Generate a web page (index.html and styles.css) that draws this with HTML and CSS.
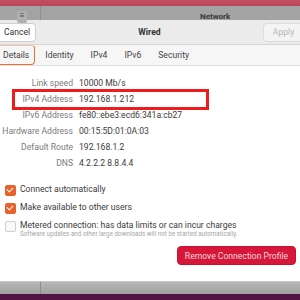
FILE: index.html
```html
<!DOCTYPE html>
<html lang="en">
<head>
  <meta charset="UTF-8">
  <title>Wired</title>
  <link rel="stylesheet" href="styles.css">
</head>
<body>
  <div class="topbar"></div>
  <div class="shell">
    <div class="shell-side"><span class="menu-btn">&#8801;</span></div>
    <div class="shell-title">Network</div>
  </div>

  <div class="dialog">
    <div class="header">
      <button class="btn cancel">Cancel</button>
      <span class="title">Wired</span>
      <button class="btn apply">Apply</button>
    </div>

    <div class="tabs">
      <a href="#" class="active">Details</a>
      <a href="#">Identity</a>
      <a href="#">IPv4</a>
      <a href="#">IPv6</a>
      <a href="#">Security</a>
    </div>

    <div class="content">
      <div class="info">
        <div class="row"><span class="label">Link speed</span><span class="value">10000 Mb/s</span></div>
        <div class="row highlight"><span class="label">IPv4 Address</span><span class="value">192.168.1.212</span></div>
        <div class="row"><span class="label">IPv6 Address</span><span class="value">fe80::ebe3:ecd6:341a:cb27</span></div>
        <div class="row"><span class="label">Hardware Address</span><span class="value">00:15:5D:01:0A:03</span></div>
        <div class="row"><span class="label">Default Route</span><span class="value">192.168.1.2</span></div>
        <div class="row"><span class="label">DNS</span><span class="value">4.2.2.2 8.8.4.4</span></div>
      </div>

      <div class="checks">
        <label class="check"><span class="box on"></span>Connect automatically</label>
        <label class="check"><span class="box on"></span>Make available to other users</label>
        <label class="check"><span class="box"></span>
          <span>Metered connection: has data limits or can incur charges
            <small>Software updates and other large downloads will not be started automatically.</small>
          </span>
        </label>
      </div>

      <div class="actions">
        <button class="btn remove">Remove Connection Profile</button>
      </div>
    </div>
  </div>

  <div class="shell-bottom"><div class="shell-side"></div></div>
  <div class="purple"></div>
</body>
</html>
```

FILE: styles.css
```css
body {
  margin: 0;
  width: 300px;
  height: 300px;
  overflow: hidden;
  font-family: Roboto, sans-serif;
  font-size: 8.6px;
  color: #3c3c3c;
  background: #a4a4a4;
}
.topbar {
  height: 6px;
  background: linear-gradient(#c24f61, #b9475a);
}
.shell {
  height: 14px;
  display: flex;
  background: #a3a3a3;
}
.shell-side {
  width: 40px;
  border-right: 1px solid #8f8f8f;
  position: relative;
}
.menu-btn {
  position: absolute;
  left: 17px;
  top: 5px;
  width: 10px;
  height: 12px;
  border-radius: 2px;
  background: #b0b0b0;
  font-size: 8px;
  line-height: 10px;
  text-align: center;
  color: #444;
}
.shell-title {
  margin-left: 159px;
  padding-top: 6px;
  height: 8px;
  overflow: hidden;
  font-weight: bold;
  font-size: 8px;
  line-height: 10px;
  color: #3a3a3a;
}

.dialog {
  height: 261px;
  background: #fff;
  display: flex;
  flex-direction: column;
}
.header {
  height: 24px;
  display: flex;
  align-items: center;
  justify-content: space-between;
  background: #ebebeb;
  border-bottom: 1px solid #d6d6d6;
}
.btn {
  font-family: inherit;
  font-size: 8.6px;
  border-radius: 4px;
  height: 19px;
  padding: 0 7px;
}
.cancel {
  margin-left: -4px;
  background: #fff;
  border: 1px solid #cfcfcf;
  color: #333;
  width: 40px;
}
.title {
  font-weight: bold;
  color: #333;
}
.apply {
  margin-right: -4px;
  width: 41px;
  background: #f4f4f4;
  border: 1px solid #dcdcdc;
  color: #b6b6b6;
}
.tabs {
  height: 20px;
  display: flex;
  background: #f6f6f6;
  border-bottom: 1px solid #e0e0e0;
}
.tabs a {
  display: block;
  text-decoration: none;
  color: #444;
  line-height: 20px;
  margin-right: 17px;
}
.tabs a.active {
  margin-left: -4px;
  padding: 0 5px 0 6px;
  border: 1px solid #e9722f;
  border-top-color: #f0c6b0;
  border-radius: 3px 3px 4px 4px;
  line-height: 18px;
  margin-right: 10px;
}

.content {
  flex: 1;
  display: flex;
  flex-direction: column;
  padding-top: 9px;
}
.row {
  display: flex;
  height: 16px;
  align-items: center;
}
.label {
  width: 73px;
  text-align: right;
  color: #7b7b7b;
  margin-right: 6px;
  white-space: nowrap;
}
.value {
  white-space: nowrap;
  color: #3b3b3b;
}
.highlight {
  position: relative;
}
.highlight::after {
  content: "";
  position: absolute;
  left: 12px;
  top: -2px;
  width: 191px;
  height: 15px;
  border: 3px solid #f01b1b;
}

.checks {
  margin-top: 13px;
  padding-left: 5px;
}
.check {
  display: flex;
  align-items: flex-start;
  margin-bottom: 6px;
  color: #3b3b3b;
  line-height: 11px;
}
.box {
  flex: none;
  width: 9px;
  height: 9px;
  margin: 1px 4px 0 0;
  border-radius: 2px;
  border: 1px solid #cfcfcf;
  background: #fafafa;
  position: relative;
}
.box.on {
  background: #e9622c;
  border-color: #e9622c;
}
.box.on::after {
  content: "";
  position: absolute;
  left: 2px;
  top: 0px;
  width: 3px;
  height: 5px;
  border: solid #fff;
  border-width: 0 1.5px 1.5px 0;
  transform: rotate(45deg);
}
.check small {
  display: block;
  font-size: 6.3px;
  line-height: 7px;
  color: #a6a6a6;
}

.actions {
  display: flex;
  justify-content: flex-end;
  padding: 2px 4px 0 0;
}
.remove {
  background: #d6173a;
  border: 1px solid #c41434;
  color: #f6d6dc;
  height: 19px;
  width: 119px;
  padding: 0;
}

.shell-bottom {
  height: 12px;
  display: flex;
  background: linear-gradient(#b8b8b8, #a0a0a0);
  border-top: 1px solid #c9c9c9;
}
.shell-bottom .shell-side {
  border-right: 1px solid #8d8d8d;
}
.purple {
  height: 7px;
  background: #521244;
}
```
